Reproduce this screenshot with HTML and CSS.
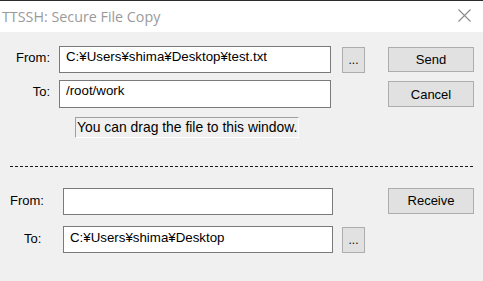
FILE: index.html
```html
<!DOCTYPE html>
<html lang="en">
<head>
    <meta charset="UTF-8">
    <title>TTSSH: Secure File Copy</title>
    <link rel="stylesheet" href="styles.css">
</head>
<body>
    <div class="window">
        <div class="titlebar">
            <span class="title">TTSSH: Secure File Copy</span>
            <svg class="close" width="13" height="13" viewBox="0 0 13 13">
                <path d="M0.5 0.5 L12.5 12.5 M12.5 0.5 L0.5 12.5" stroke="#8a8a8a" stroke-width="1.1" fill="none"/>
            </svg>
        </div>
        <div class="content">
            <div class="section send-section">
                <label class="label" for="sendFrom">From:</label>
                <input class="field" type="text" id="sendFrom" value="C:¥Users¥shima¥Desktop¥test.txt">
                <button class="btn browse">...</button>
                <button class="btn action send">Send</button>

                <label class="label" for="sendTo">To:</label>
                <input class="field tall" type="text" id="sendTo" value="/root/work">
                <span></span>
                <button class="btn action cancel">Cancel</button>

                <span></span>
                <div class="hint">You can drag the file to this window.</div>
            </div>

            <div class="divider"></div>

            <div class="section recv-section">
                <label class="label from" for="recvFrom">From:</label>
                <input class="field" type="text" id="recvFrom" value="">
                <span></span>
                <button class="btn action receive">Receive</button>

                <label class="label to" for="recvTo">To:</label>
                <input class="field" type="text" id="recvTo" value="C:¥Users¥shima¥Desktop">
                <button class="btn browse">...</button>
                <span></span>
            </div>
        </div>
    </div>
</body>
</html>
```

FILE: styles.css
```css
html, body {
    margin: 0;
    padding: 0;
    background-color: #f0f0f0;
    font-family: 'Liberation Sans', Arial, sans-serif;
    font-size: 13px;
    color: #000;
}

.window {
    width: 483px;
    height: 281px;
    background-color: #f0f0f0;
}

.titlebar {
    height: 31px;
    border-top: 1px solid #2b2b2b;
    background-color: #fff;
    display: flex;
    align-items: center;
    justify-content: space-between;
}

.title {
    font-family: 'Open Sans', 'Noto Sans', sans-serif;
    font-size: 14.3px;
    color: #9a9a9a;
    margin-left: 2px;
    margin-top: -1px;
}

.close {
    margin-right: 12px;
    margin-top: -2px;
}

.content {
    padding-top: 14px;
}

.section {
    display: grid;
    align-items: center;
}

.send-section {
    grid-template-columns: 59px 272px 57px 86px;
    grid-template-rows: 27px 28px 21px;
    row-gap: 7px;
}

.send-section .hint {
    margin-top: 3px;
}

.recv-section {
    grid-template-columns: 63px 270px 55px 86px;
    grid-template-rows: 27px 27px;
    row-gap: 11px;
}

.label {
    text-align: right;
    padding-right: 9px;
    padding-bottom: 5px;
}

.recv-section .label {
    padding-bottom: 3px;
}

.recv-section .label.from {
    text-align: left;
    padding-left: 10px;
    padding-right: 0;
}

.recv-section .label.to {
    text-align: left;
    padding-left: 24px;
    padding-right: 0;
}

.field {
    box-sizing: border-box;
    width: 100%;
    height: 27px;
    margin: 0;
    padding: 0 6px 6px 6px;
    border: 1px solid #7a7a7a;
    background-color: #fff;
    font-family: inherit;
    font-size: 13.3px;
    color: #000;
    outline: none;
}

.field.tall {
    height: 28px;
    padding-bottom: 8px;
}

.recv-section .field {
    padding-bottom: 4px;
}

.btn {
    box-sizing: border-box;
    margin: 0;
    padding: 0;
    border: 1px solid #adadad;
    background-color: #e1e1e1;
    font-family: inherit;
    font-size: 13px;
    color: #000;
}

.browse {
    width: 23px;
    height: 26px;
    margin-left: 11px;
    font-size: 12px;
    line-height: 20px;
}

.recv-section .browse {
    margin-left: 9px;
}

.action {
    width: 86px;
    height: 25px;
}

.cancel {
    height: 26px;
}

.receive {
    height: 26px;
    margin-top: -2px;
}

.hint {
    box-sizing: border-box;
    grid-column: 2 / 4;
    width: 224px;
    height: 21px;
    margin-left: 16px;
    padding: 1px 0 0 1px;
    border-top: 1px solid #a0a0a0;
    border-left: 1px solid #a0a0a0;
    border-right: 1px solid #fff;
    border-bottom: 1px solid #fff;
    font-size: 13.9px;
    line-height: 17px;
    white-space: nowrap;
}

.divider {
    height: 1px;
    margin: 30px 10px 21px 10px;
    background-image: repeating-linear-gradient(to right, #1a1a1a 0, #1a1a1a 3px, transparent 3px, transparent 5px);
}
```
